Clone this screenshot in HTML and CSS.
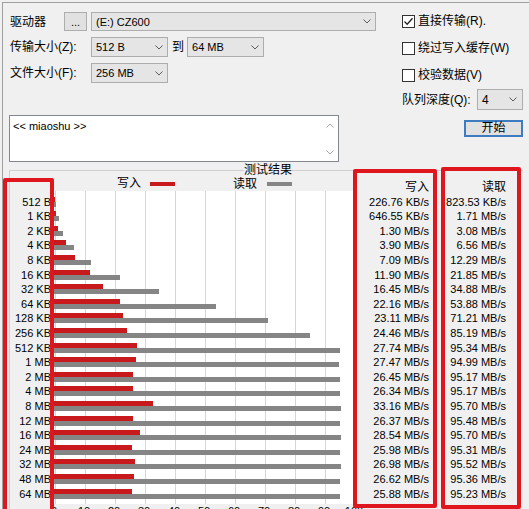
FILE: index.html
```html
<!DOCTYPE html>
<html lang="zh">

<head>
    <meta charset="UTF-8">
    <title>ATTO Disk Benchmark</title>

    <link rel="stylesheet" href="styles.css">
</head>

<body>

    <div class="window">
        <div class="top">
            <div class="form">
                <div class="row">
                    <span class="lbl short">驱动器</span>
                    <div class="dots">...</div>
                    <div class="combo drive">(E:) CZ600
                        <svg class="chev" width="8" height="5" viewBox="0 0 8 5"><path d="M0.5 0.5 L4 4 L7.5 0.5" /></svg>
                    </div>
                </div>
                <div class="row">
                    <span class="lbl">传输大小(Z):</span>
                    <div class="combo size">512 B
                        <svg class="chev" width="8" height="5" viewBox="0 0 8 5"><path d="M0.5 0.5 L4 4 L7.5 0.5" /></svg>
                    </div>
                    <span class="to">到</span>
                    <div class="combo size">64 MB
                        <svg class="chev" width="8" height="5" viewBox="0 0 8 5"><path d="M0.5 0.5 L4 4 L7.5 0.5" /></svg>
                    </div>
                </div>
                <div class="row">
                    <span class="lbl">文件大小(F):</span>
                    <div class="combo size">256 MB
                        <svg class="chev" width="8" height="5" viewBox="0 0 8 5"><path d="M0.5 0.5 L4 4 L7.5 0.5" /></svg>
                    </div>
                </div>
                <div class="memo">
                    <div class="memo_text">&lt;&lt; miaoshu &gt;&gt;</div>
                    <div class="memo_scroll">
                        <svg class="chev light" width="8" height="5" viewBox="0 0 8 5"><path d="M0.5 4.5 L4 1 L7.5 4.5" /></svg>
                        <svg class="chev light" width="8" height="5" viewBox="0 0 8 5"><path d="M0.5 0.5 L4 4 L7.5 0.5" /></svg>
                    </div>
                </div>
            </div>

            <div class="options">
                <div class="check">
                    <span class="box"><svg width="11" height="11" viewBox="0 0 11 11"><path d="M1.5 5.5 L4.2 8.2 L9.5 2.2" /></svg></span>直接传输(R).
                </div>
                <div class="check"><span class="box"></span>绕过写入缓存(W)</div>
                <div class="check last"><span class="box"></span>校验数据(V)</div>
                <div class="queue">
                    <span>队列深度(Q):</span>
                    <div class="combo depth">4
                        <svg class="chev" width="8" height="5" viewBox="0 0 8 5"><path d="M0.5 0.5 L4 4 L7.5 0.5" /></svg>
                    </div>
                </div>
                <div class="start">开始</div>
            </div>
        </div>

        <div class="group_head"><span>测试结果</span></div>

        <section class="results">
            <div class="labels"></div>

            <div class="chart">
                <div class="legend">
                    <span>写入</span><i class="swatch write"></i>
                    <span class="legend_read">读取</span><i class="swatch read"></i>
                </div>
                <div class="plot">
                    <template>
                        <div class="bar_row">
                            <div class="bar write"></div>
                            <div class="bar read"></div>
                        </div>
                    </template>
                </div>
                <div class="axis">
                    <span>0</span><span>10</span><span>20</span><span>30</span><span>40</span><span>50</span>
                    <span>60</span><span>70</span><span>80</span><span>90</span><span>100</span>
                </div>
            </div>

            <div class="vals write">
                <div class="val_head">写入</div>
            </div>
            <div class="vals read">
                <div class="val_head">读取</div>
            </div>
        </section>
    </div>

    <!-- markerede kolonner -->
    <div class="mark mark_labels"></div>
    <div class="mark mark_write"></div>
    <div class="mark mark_read"></div>

    <script>
        const results = [
            ["512 B", "226.76 KB/s", "823.53 KB/s"],
            ["1 KB", "646.55 KB/s", "1.71 MB/s"],
            ["2 KB", "1.30 MB/s", "3.08 MB/s"],
            ["4 KB", "3.90 MB/s", "6.56 MB/s"],
            ["8 KB", "7.09 MB/s", "12.29 MB/s"],
            ["16 KB", "11.90 MB/s", "21.85 MB/s"],
            ["32 KB", "16.45 MB/s", "34.88 MB/s"],
            ["64 KB", "22.16 MB/s", "53.88 MB/s"],
            ["128 KB", "23.11 MB/s", "71.21 MB/s"],
            ["256 KB", "24.46 MB/s", "85.19 MB/s"],
            ["512 KB", "27.74 MB/s", "95.34 MB/s"],
            ["1 MB", "27.47 MB/s", "94.99 MB/s"],
            ["2 MB", "26.45 MB/s", "95.17 MB/s"],
            ["4 MB", "26.34 MB/s", "95.17 MB/s"],
            ["8 MB", "33.16 MB/s", "95.70 MB/s"],
            ["12 MB", "26.37 MB/s", "95.48 MB/s"],
            ["16 MB", "28.54 MB/s", "95.70 MB/s"],
            ["24 MB", "25.98 MB/s", "95.31 MB/s"],
            ["32 MB", "26.98 MB/s", "95.52 MB/s"],
            ["48 MB", "26.62 MB/s", "95.36 MB/s"],
            ["64 MB", "25.88 MB/s", "95.23 MB/s"]
        ];

        // 10 MB/s = 30px in the plot
        const scale = 3;

        const labels = document.querySelector(".labels");
        const plot = document.querySelector(".plot");
        const template = document.querySelector(".plot template").content;
        const writeCol = document.querySelector(".vals.write");
        const readCol = document.querySelector(".vals.read");

        function toMB(text) {
            const n = parseFloat(text);
            return text.includes("KB") ? n / 1024 : n;
        }

        function addCell(parent, cls, text) {
            const div = document.createElement("div");
            div.className = cls;
            div.textContent = text;
            parent.appendChild(div);
        }

        results.forEach(r => {
            addCell(labels, "lbl_row", r[0]);
            addCell(writeCol, "val_row", r[1]);
            addCell(readCol, "val_row", r[2]);

            const klon = template.cloneNode(true);
            klon.querySelector(".bar.write").style.width = toMB(r[1]) * scale + "px";
            klon.querySelector(".bar.read").style.width = toMB(r[2]) * scale + "px";
            plot.appendChild(klon);
        });
    </script>

</body>

</html>
```

FILE: styles.css
```css
* {
    box-sizing: border-box;
}

html,
body {
    overflow: hidden;
}

body {
    margin: 0;
    height: 509px;
    position: relative;
    background-color: #f0f0f0;
    font-family: "Liberation Sans", "Noto Sans CJK SC", sans-serif;
    font-size: 11px;
    color: #000;
}

.window {
    margin: 2px 0 0 2px;
    border-top: 1px solid #a0a0a0;
    border-left: 1px solid #a0a0a0;
    padding: 9px 6px 0 6px;
}

/* top form */

.top {
    display: flex;
}

.form {
    width: 368px;
}

.row {
    display: flex;
    align-items: center;
    height: 20px;
    margin-bottom: 6px;
}

.row:first-child {
    height: 19px;
}

.lbl {
    width: 82px;
    padding-left: 1px;
    font-size: 12px;
    line-height: 14px;
}

.lbl.short {
    width: 55px;
}

.dots {
    width: 23px;
    height: 19px;
    border: 1px solid #adadad;
    background-color: #e1e1e1;
    text-align: center;
    line-height: 19px;
}

.combo {
    height: 100%;
    border: 1px solid #adadad;
    background-color: #e5e5e5;
    display: flex;
    align-items: center;
    justify-content: space-between;
    padding: 0 4px 0 4px;
}

.combo.drive {
    margin-left: 4px;
    width: 285px;
}

.combo.size {
    width: 77px;
}

.combo.depth {
    width: 46px;
    height: 21px;
    padding-right: 5px;
}

.chev path {
    fill: none;
    stroke: #5a5a5a;
    stroke-width: 1;
}

.chev.light path {
    stroke: #a8a8a8;
}

.to {
    margin: 0 3px 0 4px;
    font-size: 12px;
    line-height: 14px;
}

/* the margin collapses with the row above, so it is the full gap */
.memo {
    margin-top: 32px;
    width: 330px;
    height: 47px;
    border: 1px solid #828790;
    background-color: #fff;
    display: flex;
}

.memo_text {
    flex: 1;
    padding: 4px 3px;
    line-height: 13px;
}

.memo_scroll {
    width: 17px;
    display: flex;
    flex-direction: column;
    justify-content: space-between;
    align-items: center;
    padding: 7px 0 6px 0;
}

.options {
    margin-left: 24px;
    width: 122px;
    font-size: 12px;
}

.check {
    display: flex;
    align-items: center;
    height: 18px;
    margin-bottom: 9px;
    line-height: 14px;
}

.check.last {
    margin-bottom: 5px;
}

.box {
    width: 13px;
    height: 13px;
    border: 1px solid #333;
    background-color: #fff;
    margin: 0 3px 0 1px;
    display: flex;
}

.box path {
    fill: none;
    stroke: #222;
    stroke-width: 1.3;
}

.queue {
    display: flex;
    align-items: center;
    justify-content: space-between;
    height: 21px;
    padding-left: 1px;
    line-height: 14px;
}

.start {
    margin: 10px 0 0 auto;
    width: 59px;
    height: 17px;
    border: 2px solid #3d7cc0;
    background-color: #e1e1e1;
    text-align: center;
    line-height: 13px;
}

/* results group */

.group_head {
    display: flex;
    height: 12px;
    margin-top: 2px;
    font-size: 12px;
    line-height: 12px;
}

.group_head::before,
.group_head::after {
    content: "";
    height: 6px;
    margin-top: 6px;
    border-top: 1px solid #d0d0d0;
}

.group_head::before {
    width: 234px;
    border-left: 1px solid #d0d0d0;
}

.group_head::after {
    flex: 1;
}

.results {
    display: flex;
    border-left: 1px solid #d0d0d0;
}

.labels {
    width: 43px;
    padding: 18.7px 2px 0 0;
    text-align: right;
}

.lbl_row,
.val_row,
.val_head {
    height: 14.6px;
    line-height: 14.6px;
}

.chart {
    width: 302px;
}

.legend {
    height: 15px;
    display: flex;
    align-items: center;
    padding-left: 64px;
    font-size: 12px;
    line-height: 13px;
}

.swatch {
    width: 25px;
    height: 4px;
    margin-left: 9px;
}

.swatch.write {
    background-color: #c8191c;
}

.swatch.read {
    margin-left: 10px;
    background-color: #858585;
}

.legend_read {
    margin: 2px 0 0 58px;
}

.plot {
    padding: 3.7px 0 2.7px 1px;
    background-color: #fff;
    background-image: repeating-linear-gradient(90deg, transparent 0 2px, #d6d6d6 2px 3px, transparent 3px 30px);
}

.bar_row {
    height: 14.6px;
    padding-top: 2px;
}

.bar {
    height: 5px;
}

.bar.write {
    background-color: #c8191c;
}

.bar.read {
    background-color: #858585;
}

.axis {
    display: grid;
    grid-template-columns: repeat(11, 30px);
    margin-left: -14px;
    padding-top: 1px;
    text-align: center;
    line-height: 12px;
}

.vals {
    text-align: right;
    padding-top: 4.1px;
}

.vals.write {
    width: 81px;
    padding-right: 7px;
}

.vals.read {
    width: 85px;
    padding-right: 15px;
}

.val_head {
    font-size: 12px;
}

/* red frames drawn over the columns */

.mark {
    position: absolute;
    border: 4px solid #e0161e;
    border-radius: 2px;
}

.mark_labels {
    left: 3px;
    top: 178px;
    width: 51px;
    height: 340px;
}

.mark_write {
    left: 353px;
    top: 169px;
    width: 84px;
    height: 339px;
}

.mark_read {
    left: 441px;
    top: 167px;
    width: 80px;
    height: 342px;
}
```
